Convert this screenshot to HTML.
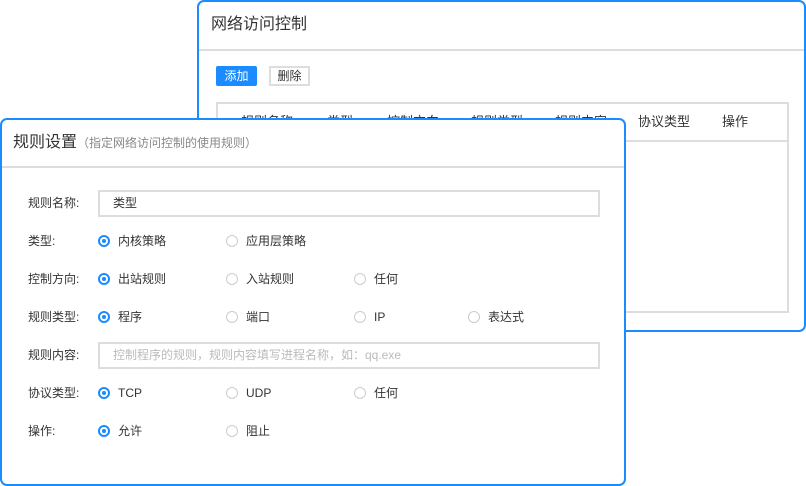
<!DOCTYPE html><html><head><meta charset="utf-8"><style>
*{margin:0;padding:0;box-sizing:border-box}
body{width:806px;height:486px;background:#fff;position:relative;overflow:hidden;font-family:"Liberation Sans","Noto Sans CJK SC",sans-serif;color:#333;font-size:12px}
.win{position:absolute;background:#fff;border:2px solid #1a8cff;border-radius:7px}
.a{position:absolute;white-space:nowrap;line-height:16px}
.r{position:absolute;width:12px;height:12px;border-radius:50%;border:1px solid #ccc;background:#fff}
.r.on{border:2px solid #1a8cff}
.r.on::after{content:"";position:absolute;left:2px;top:2px;width:4px;height:4px;border-radius:50%;background:#1a8cff}
</style></head><body>
<div class="win" style="left:197px;top:0;width:609px;height:332px">
<div class="a" style="left:12px;top:13px;font-size:16px;line-height:20px;color:#333">网络访问控制</div>
<div class="a" style="left:0;top:47px;width:605px;height:2px;background:#ddd"></div>
<div class="a" style="left:17px;top:64px;width:41px;height:20px;background:#1a8cff;border-radius:2px;color:#fff;text-align:center;line-height:20px">添加</div>
<div class="a" style="left:70px;top:64px;width:41px;height:20px;border:2px solid #ddd;color:#333;text-align:center;line-height:16px">删除</div>
<div class="a" style="left:17px;top:100px;width:573px;height:211px;border:2px solid #ddd"></div>
<div class="a" style="left:17px;top:138px;width:573px;height:2px;background:#ddd"></div>
<div class="a" style="left:42px;top:112px;font-size:13px">规则名称</div>
<div class="a" style="left:128px;top:112px;font-size:13px">类型</div>
<div class="a" style="left:188px;top:112px;font-size:13px">控制方向</div>
<div class="a" style="left:272px;top:112px;font-size:13px">规则类型</div>
<div class="a" style="left:356px;top:112px;font-size:13px">规则内容</div>
<div class="a" style="left:439px;top:112px;font-size:13px">协议类型</div>
<div class="a" style="left:523px;top:112px;font-size:13px">操作</div>
</div>
<div class="win" style="left:0;top:118px;width:626px;height:368px">
<div class="a" style="left:11px;top:13px;font-size:16px;line-height:20px;color:#333">规则设置<span style="font-size:12px;color:#888">（指定网络访问控制的使用规则）</span></div>
<div class="a" style="left:0;top:46px;width:622px;height:2px;background:#ddd"></div>
</div>
<div class="a" style="left:28px;top:195px">规则名称:</div>
<div class="a" style="left:98px;top:190px;width:502px;height:27px;border:2px solid #ddd;padding-left:13px;line-height:23px">类型</div>
<div class="a" style="left:28px;top:233px">类型:</div>
<div class="a" style="left:28px;top:271px">控制方向:</div>
<div class="a" style="left:28px;top:309px">规则类型:</div>
<div class="a" style="left:28px;top:347px">规则内容:</div>
<div class="a" style="left:98px;top:342px;width:502px;height:27px;border:2px solid #ddd;padding-left:13px;line-height:23px;color:#bbb">控制程序的规则，规则内容填写进程名称，如：qq.exe</div>
<div class="a" style="left:28px;top:385px">协议类型:</div>
<div class="a" style="left:28px;top:423px">操作:</div>

<div class="r on" style="left:98px;top:235px"></div><div class="a" style="left:118px;top:233px">内核策略</div>
<div class="r" style="left:226px;top:235px"></div><div class="a" style="left:246px;top:233px">应用层策略</div>
<div class="r on" style="left:98px;top:273px"></div><div class="a" style="left:118px;top:271px">出站规则</div>
<div class="r" style="left:226px;top:273px"></div><div class="a" style="left:246px;top:271px">入站规则</div>
<div class="r" style="left:354px;top:273px"></div><div class="a" style="left:374px;top:271px">任何</div>
<div class="r on" style="left:98px;top:311px"></div><div class="a" style="left:118px;top:309px">程序</div>
<div class="r" style="left:226px;top:311px"></div><div class="a" style="left:246px;top:309px">端口</div>
<div class="r" style="left:354px;top:311px"></div><div class="a" style="left:374px;top:309px">IP</div>
<div class="r" style="left:468px;top:311px"></div><div class="a" style="left:488px;top:309px">表达式</div>
<div class="r on" style="left:98px;top:387px"></div><div class="a" style="left:118px;top:385px">TCP</div>
<div class="r" style="left:226px;top:387px"></div><div class="a" style="left:246px;top:385px">UDP</div>
<div class="r" style="left:354px;top:387px"></div><div class="a" style="left:374px;top:385px">任何</div>
<div class="r on" style="left:98px;top:425px"></div><div class="a" style="left:118px;top:423px">允许</div>
<div class="r" style="left:226px;top:425px"></div><div class="a" style="left:246px;top:423px">阻止</div>
</body></html>
